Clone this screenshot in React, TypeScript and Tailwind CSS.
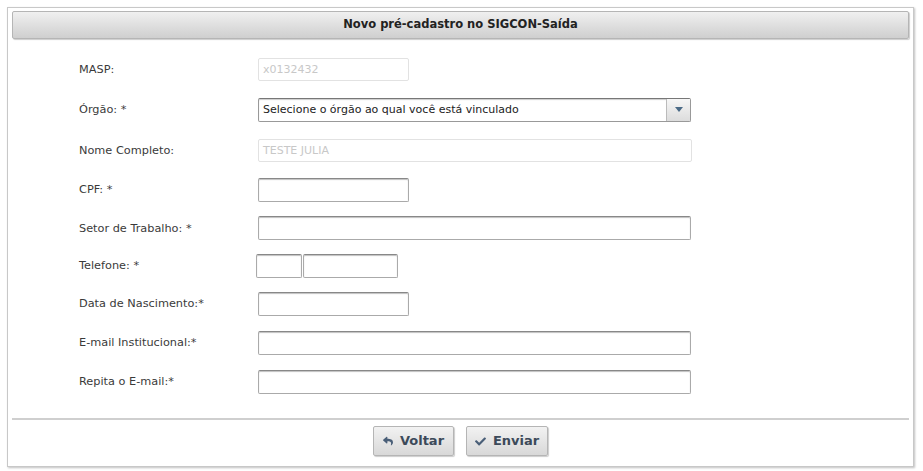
import { FaCheck, FaReply } from 'react-icons/fa';

const font = { fontFamily: '"DejaVu Sans", Verdana, sans-serif' };

function Row({ label, h, children }: { label: string; h: string; children: React.ReactNode }) {
  return (
    <div className={`flex items-center ${h}`}>
      <div className="w-[251px] shrink-0 pl-[72px] pt-[2px] text-[11.3px] text-[#3a3a3a]">{label}</div>
      <div className="flex">{children}</div>
    </div>
  );
}

function Field({ w, disabled, value }: { w: string; disabled?: boolean; value?: string }) {
  if (disabled) {
    return (
      <div className={`${w} h-[23px] rounded-[2px] border border-[#e2e2e2] px-[4px] text-[11px] leading-[21px] text-[#c8c8c8]`}>
        {value}
      </div>
    );
  }
  return (
    <div className={`${w} h-[24px] rounded-[2px] border border-[#aaa] border-t-[#888] shadow-[inset_0_1px_1px_rgba(0,0,0,0.25)] bg-white`} />
  );
}

export default function App() {
  return (
    <div className="w-[923px] h-[471px] bg-white pt-[7px] pl-[7px]" style={font}>
      <div className="w-[907px] h-[460px] border border-[#c8c8c8] shadow-[1px_1px_2px_rgba(0,0,0,0.25)] pt-[3px] px-[4px]">
        <div className="h-[28px] rounded-[2px] border border-[#b5b5b5] bg-gradient-to-b from-[#f0f0f0] to-[#cfcfcf] shadow-[1px_1px_1px_rgba(0,0,0,0.2)] flex items-center justify-center text-[11.5px] font-bold text-[#222]">
          Novo pré-cadastro no SIGCON-Saída
        </div>
        <div className="pt-[10px] -ml-[5px]">
          <Row label="MASP:" h="h-[40px]">
            <Field w="w-[151px]" disabled value="x0132432" />
          </Row>
          <Row label="Órgão: *" h="h-[41px]">
            <div className="w-[433px] h-[24px] rounded-[2px] border border-[#999] border-t-[#777] shadow-[inset_0_1px_1px_rgba(0,0,0,0.2)] flex">
              <div className="flex-1 px-[4px] text-[11px] leading-[22px] text-[#222]">Selecione o órgão ao qual você está vinculado</div>
              <div className="w-[24px] border-l border-[#bbb] bg-gradient-to-b from-[#f6f6f6] to-[#dcdcdc] flex items-center justify-center">
                <svg width="8" height="5" viewBox="0 0 8 5"><path d="M0 0h8L4 5z" fill="#4a6a86" /></svg>
              </div>
            </div>
          </Row>
          <Row label="Nome Completo:" h="h-[40px]">
            <Field w="w-[434px]" disabled value="TESTE JULIA" />
          </Row>
          <Row label="CPF: *" h="h-[39px]">
            <Field w="w-[151px]" />
          </Row>
          <Row label="Setor de Trabalho: *" h="h-[38px]">
            <Field w="w-[433px]" />
          </Row>
          <Row label="Telefone: *" h="h-[37px]">
            <div className="-ml-[2px] flex gap-[1px]">
              <Field w="w-[46px]" />
              <Field w="w-[95px]" />
            </div>
          </Row>
          <Row label="Data de Nascimento:*" h="h-[39px]">
            <Field w="w-[151px]" />
          </Row>
          <Row label="E-mail Institucional:*" h="h-[39px]">
            <Field w="w-[433px]" />
          </Row>
          <Row label="Repita o E-mail:*" h="h-[39px]">
            <Field w="w-[433px]" />
          </Row>
        </div>
        <div className="mt-[17px] border-t-2 border-[#cfcfcf] flex justify-center gap-[12px] pt-[6px]">
          <button className="w-[81px] h-[30px] rounded-[2px] border border-[#b5b5b5] bg-gradient-to-b from-[#f2f2f2] to-[#d8d8d8] shadow-[1px_1px_1px_rgba(0,0,0,0.2)] flex items-center justify-center gap-[7px] text-[13px] font-bold text-[#3c4a5a]">
            <FaReply className="w-[10px] h-[10px] text-[#4a5f78]" /> Voltar
          </button>
          <button className="w-[82px] h-[30px] rounded-[2px] border border-[#b5b5b5] bg-gradient-to-b from-[#f2f2f2] to-[#d8d8d8] shadow-[1px_1px_1px_rgba(0,0,0,0.2)] flex items-center justify-center gap-[7px] text-[13px] font-bold text-[#3c4a5a]">
            <FaCheck className="w-[11px] h-[11px] text-[#4a5f78]" /> Enviar
          </button>
        </div>
      </div>
    </div>
  );
}
